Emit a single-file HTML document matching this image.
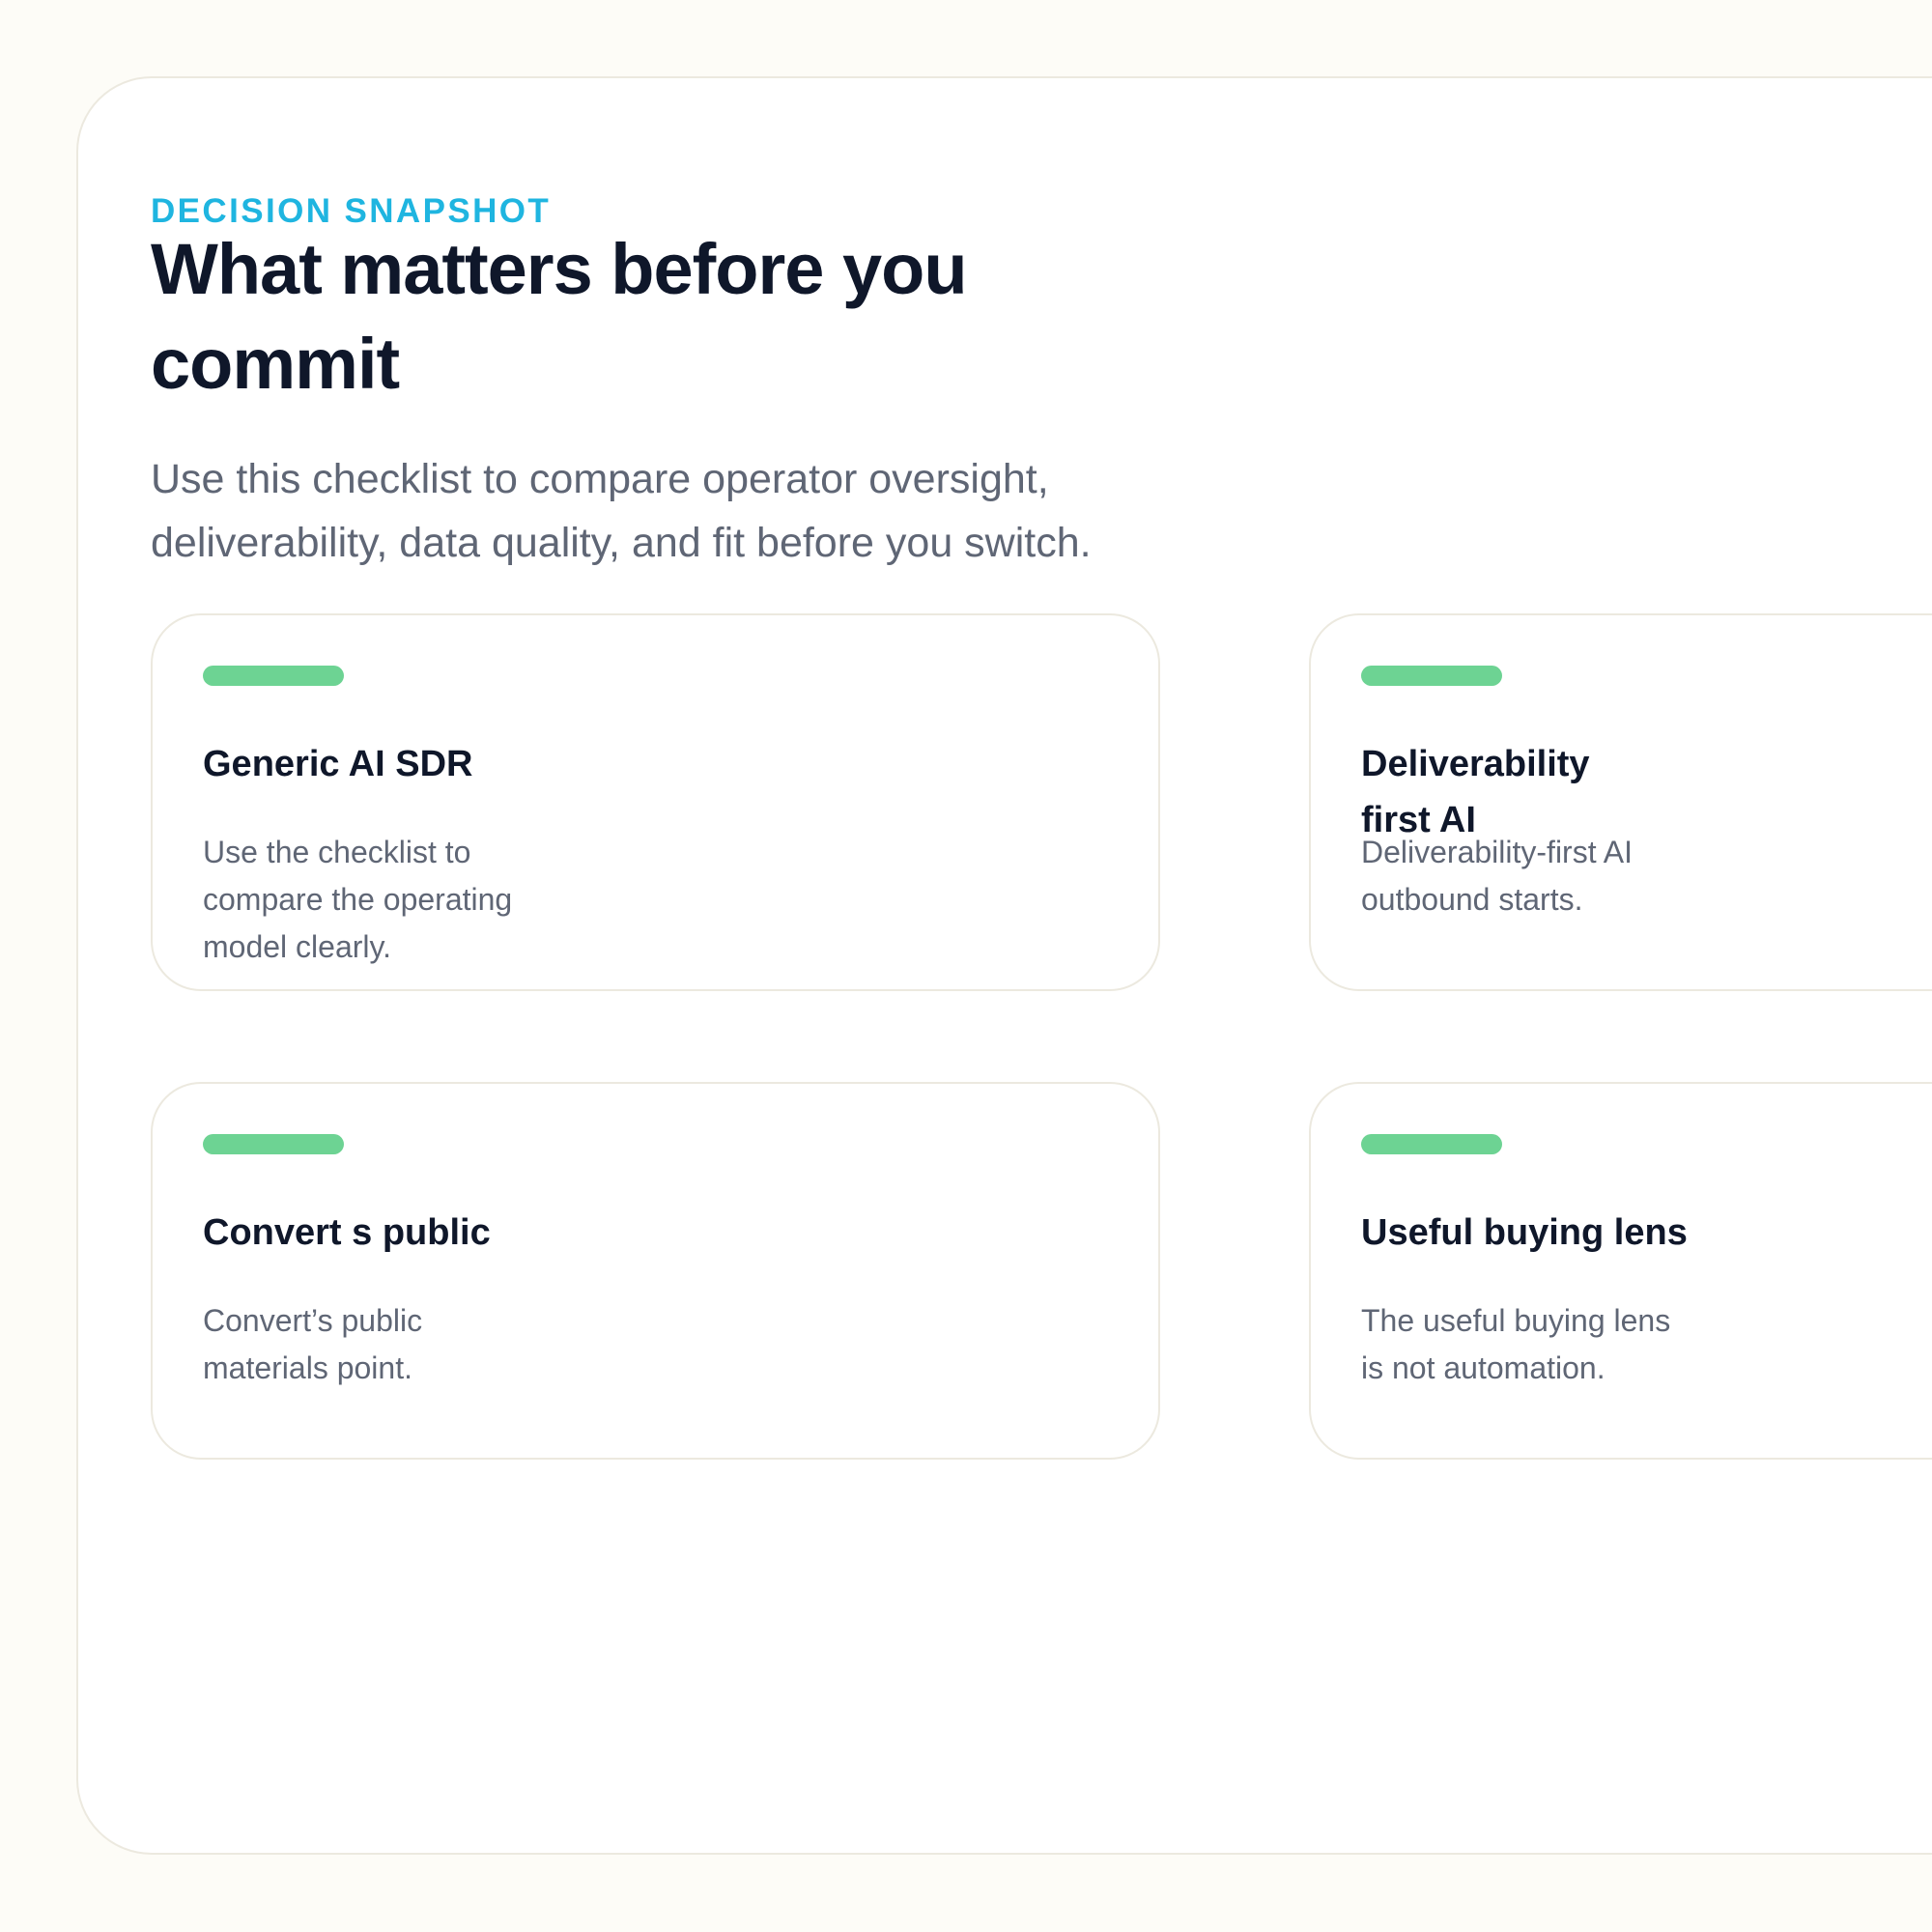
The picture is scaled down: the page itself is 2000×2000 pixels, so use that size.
<!DOCTYPE html>
<html><head><meta charset="utf-8"><style>
*{margin:0;padding:0;box-sizing:border-box}
body{width:2000px;height:2000px;background:#fdfcf7;font-family:"Liberation Sans",sans-serif;position:relative;overflow:hidden}
.outer{position:absolute;left:79px;top:79px;width:2100px;height:1841px;background:#fff;border:2px solid #ece9df;border-radius:78px}
.eb{position:absolute;left:156px;top:199px;font-size:35px;font-weight:700;letter-spacing:2.4px;color:#1fb5e0}
h1{position:absolute;left:156px;top:230px;font-size:74px;line-height:98px;font-weight:700;color:#0f172a;letter-spacing:-1px}
.p{position:absolute;left:156px;top:463px;font-size:43px;line-height:66px;color:#5f6675}
.card{position:absolute;width:1045px;height:391px;background:#fff;border:2px solid #ece9df;border-radius:52px}
.bar{position:absolute;left:52px;top:52px;width:146px;height:21px;border-radius:11px;background:#6dd393}
.t{position:absolute;left:52px;top:125px;font-size:38px;line-height:58px;font-weight:700;color:#0f172a;white-space:nowrap}
.d{position:absolute;left:52px;top:221px;font-size:32px;line-height:49px;color:#5f6675;white-space:nowrap}
</style></head><body>
<div class="outer"></div>
<div class="eb">DECISION SNAPSHOT</div>
<h1>What matters before you<br>commit</h1>
<div class="p">Use this checklist to compare operator oversight,<br>deliverability, data quality, and fit before you switch.</div>
<div class="card" style="left:156px;top:635px"><div class="bar"></div><div class="t">Generic AI SDR</div><div class="d">Use the checklist to<br>compare the operating<br>model clearly.</div></div>
<div class="card" style="left:1355px;top:635px"><div class="bar"></div><div class="t">Deliverability<br>first AI</div><div class="d">Deliverability-first AI<br>outbound starts.</div></div>
<div class="card" style="left:156px;top:1120px"><div class="bar"></div><div class="t">Convert s public</div><div class="d">Convert’s public<br>materials point.</div></div>
<div class="card" style="left:1355px;top:1120px"><div class="bar"></div><div class="t">Useful buying lens</div><div class="d">The useful buying lens<br>is not automation.</div></div>
</body></html>
